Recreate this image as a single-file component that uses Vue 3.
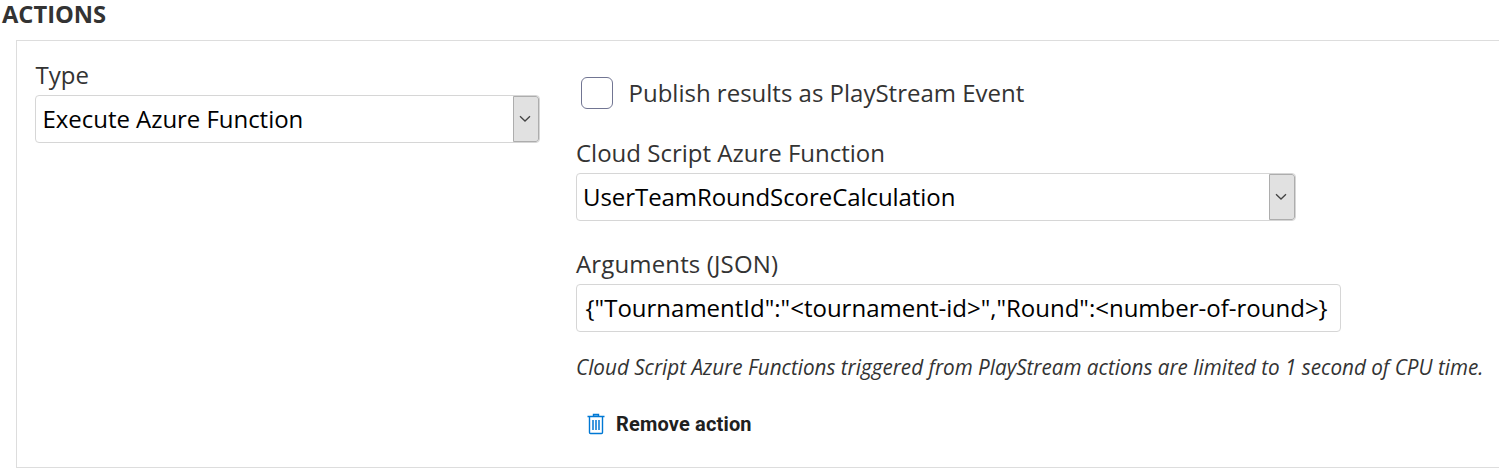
<script setup>
const actionType = 'Execute Azure Function'
const functionName = 'UserTeamRoundScoreCalculation'
const args = '{"TournamentId":"<tournament-id>","Round":<number-of-round>}'
</script>

<template>
  <main class="page">
    <h2 class="heading"><span>ACTIONS</span></h2>
    <section class="panel">
      <div class="left">
        <div class="label type-label"><span>Type</span></div>
        <div class="field select">
          <span class="value type-value">{{ actionType }}</span>
          <span class="arrow">
            <svg width="12" height="8" viewBox="0 0 12 8"><path d="M1 1.2 L6 6 L11 1.2" /></svg>
          </span>
        </div>
      </div>
      <div class="right">
        <div class="check-row">
          <span class="checkbox"></span>
          <span class="check-label">Publish results as PlayStream Event</span>
        </div>
        <div class="label function-label"><span>Cloud Script Azure Function</span></div>
        <div class="field select function">
          <span class="value function-value">{{ functionName }}</span>
          <span class="arrow">
            <svg width="12" height="8" viewBox="0 0 12 8"><path d="M1 1.2 L6 6 L11 1.2" /></svg>
          </span>
        </div>
        <div class="label args-label"><span>Arguments (JSON)</span></div>
        <div class="field args"><span class="value">{{ args }}</span></div>
        <p class="note"><span>Cloud Script Azure Functions triggered from PlayStream actions are limited to 1 second of CPU time.</span></p>
        <div class="remove">
          <svg class="trash" width="18" height="22" viewBox="0 0 18 22">
            <path class="lid" d="M6.5 3V1.5H11.5V3" />
            <path d="M0.5 3.5H17.5M2.5 3.5V19.5Q2.5 20.5 3.5 20.5H14.5Q15.5 20.5 15.5 19.5V3.5" />
            <path class="bars" d="M6 7V17M9 7V17M12 7V17" />
          </svg>
          <span class="remove-text">Remove action</span>
        </div>
      </div>
    </section>
  </main>
</template>

<style>
body {
  margin: 0;
  background: #fff;
}
</style>

<style scoped>
.page {
  width: 1499px;
  height: 475px;
  overflow: hidden;
  font-family: "Open Sans", sans-serif;
  font-size: 24px;
  color: #333;
  white-space: nowrap;
}
.heading {
  margin: 0;
  height: 40px;
  padding-left: 2px;
  box-sizing: border-box;
  font-size: 23.7px;
  font-weight: 700;
  line-height: 28px;
}
.panel {
  display: flex;
  box-sizing: border-box;
  width: 1500px;
  height: 428px;
  margin-left: 16px;
  padding-left: 18px;
  border: 1px solid #ddd;
}
.left {
  width: 505px;
  padding-top: 16px;
}
.right {
  width: 920px;
  margin-left: 36px;
  padding-top: 36px;
}
.label {
  height: 38px;
  line-height: 36px;
}
.type-label {
  padding-left: 0.5px;
}
.field {
  display: flex;
  align-items: center;
  box-sizing: border-box;
  height: 48px;
  border: 1px solid #d6d6d6;
  border-radius: 4px;
  overflow: hidden;
  color: #000;
  background: #fff;
}
.select {
  justify-content: space-between;
  padding-left: 6px;
}
.function {
  width: 720px;
}
.value {
  line-height: 46px;
}
.type-value {
  padding-left: 0.5px;
  letter-spacing: -0.04px;
}
.function-value {
  letter-spacing: -0.06px;
}
.arrow {
  display: flex;
  align-items: center;
  justify-content: center;
  box-sizing: border-box;
  width: 26px;
  height: 46px;
  padding-right: 2px;
  border: 1px solid #adadad;
  border-radius: 0 3px 3px 0;
  background: #e1e1e1;
}
.arrow svg {
  fill: none;
  stroke: #444;
  stroke-width: 1.3;
}
.check-row {
  display: flex;
  align-items: center;
  height: 32px;
  padding-left: 5px;
}
.checkbox {
  box-sizing: border-box;
  width: 32px;
  height: 32px;
  margin-right: 15.5px;
  border: 1px solid #717592;
  border-radius: 6px;
}
.check-label {
  line-height: 32px;
}
.function-label {
  margin-top: 26px;
}
.args-label {
  margin-top: 25px;
  letter-spacing: 0.14px;
}
.args {
  width: 765px;
  padding-left: 8.6px;
}
.note {
  margin: 18px 0 0;
  height: 34px;
  font-size: 22px;
  font-style: italic;
  line-height: 32px;
}
.note span {
  display: inline-block;
  transform: scaleX(0.939);
  transform-origin: left center;
}
.remove {
  display: flex;
  align-items: center;
  height: 24px;
  margin-top: 28px;
  padding-left: 11px;
  color: #202020;
}
.trash {
  margin-right: 11px;
  fill: none;
  stroke: #0078d4;
  stroke-width: 1.4;
}
.trash .lid {
  fill: #8cc4ee;
}
.trash .bars {
  stroke-width: 1.5;
}
.remove-text {
  font-family: Roboto, sans-serif;
  font-size: 20px;
  font-weight: 700;
  letter-spacing: 0.17px;
}
</style>
